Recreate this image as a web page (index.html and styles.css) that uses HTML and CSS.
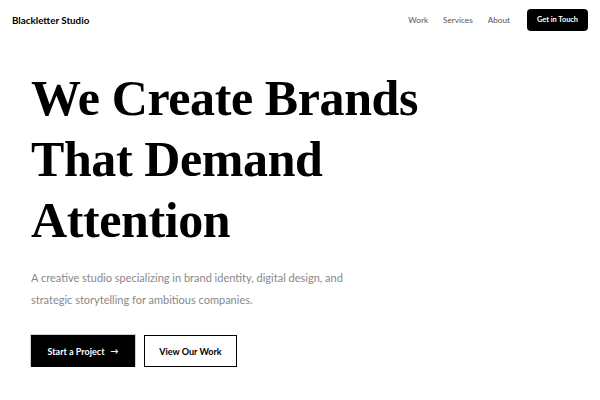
FILE: index.html
```html
<!DOCTYPE html>
<html lang="en">
  <head>
    <meta charset="UTF-8" />
    <meta name="viewport" content="width=device-width, initial-scale=1.0" />
    <title>Blackletter Studio</title>
    <link rel="stylesheet" href="styles.css">
  </head>
  <body>
    <header class="nav">
      <span class="logo">Blackletter Studio</span>
      <nav class="links">
        <a href="#">Work</a>
        <a href="#">Services</a>
        <a href="#">About</a>
        <a href="#" class="cta">Get in Touch</a>
      </nav>
    </header>

    <section class="hero">
      <h1 class="title">We Create Brands<br />That Demand<br />Attention</h1>
      <p class="lead">
        A creative studio specializing in brand identity, digital design, and<br />
        strategic storytelling for ambitious companies.
      </p>
      <div class="actions">
        <a href="#" class="btn btn-dark">Start a Project <span class="arrow">&rarr;</span></a>
        <a href="#" class="btn btn-line">View Our Work</a>
      </div>
    </section>
  </body>
</html>
```

FILE: styles.css
```css
* {
  box-sizing: border-box;
}
body {
  margin: 0;
  background: #fff;
  color: #000;
  font-family: Lato, "Open Sans", sans-serif;
}
a {
  text-decoration: none;
  color: inherit;
}

/* 상단 메뉴 */
.nav {
  display: flex;
  justify-content: space-between;
  align-items: center;
  height: 40px;
  padding: 0 12px;
}
.logo {
  font-size: 9.8px;
  font-weight: 700;
}
.links {
  display: flex;
  align-items: center;
  gap: 15px;
  font-size: 8.2px;
  color: #555;
}
.cta {
  margin-left: 2px;
  width: 61px;
  text-align: center;
  background: #000;
  color: #fff;
  font-weight: 700;
  font-size: 7.4px;
  height: 22px;
  line-height: 22px;
  border-radius: 4px;
}

/* 메인 */
.hero {
  padding: 28px 31px 0;
}
.title {
  margin: 0;
  font-family: "Liberation Serif", serif;
  font-weight: 700;
  font-size: 50px;
  line-height: 61px;
  letter-spacing: -0.4px;
}
.lead {
  margin: 16px 0 0;
  font-size: 11px;
  font-weight: 400;
  line-height: 21.5px;
  color: #888;
}
.actions {
  display: flex;
  gap: 9px;
  margin-top: 25px;
}
.btn {
  display: inline-flex;
  align-items: center;
  justify-content: center;
  height: 32px;
  font-size: 9px;
  font-weight: 700;
}
.btn-dark {
  width: 104px;
  background: #000;
  color: #fff;
  box-shadow: 0 0 0 1px #d0d0d0;
}
.arrow {
  margin-left: 6px;
  font-size: 8px;
}
.btn-line {
  width: 93px;
  border: 1.5px solid #000;
}
```
